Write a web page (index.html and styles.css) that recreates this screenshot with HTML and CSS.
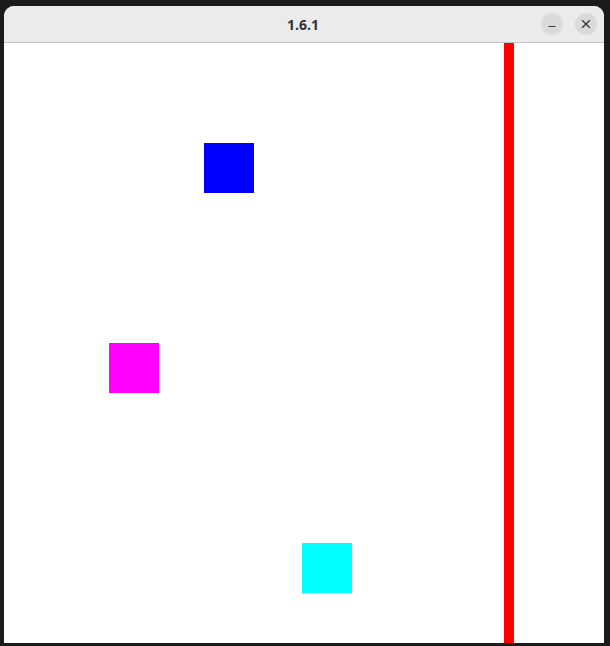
FILE: index.html
```html
<!DOCTYPE html>
<html>
<head>
<meta charset="utf-8">
<link rel="stylesheet" href="styles.css">
</head>
<body>
<div class="window">
  <div class="titlebar">
    <div class="title">1.6.1</div>
    <div class="controls">
      <button class="ctl" aria-label="minimize">
        <svg width="10" height="10" viewBox="0 0 10 10"><path d="M1.5 7.5h7" stroke="#333" stroke-width="1.2"/></svg>
      </button>
      <button class="ctl" aria-label="close">
        <svg width="10" height="10" viewBox="0 0 10 10"><path d="M1.2 1.2l7.6 7.6M8.8 1.2l-7.6 7.6" stroke="#333" stroke-width="1.3"/></svg>
      </button>
    </div>
  </div>
  <div class="canvas">
    <div class="sq blue"></div>
    <div class="sq magenta"></div>
    <div class="sq cyan"></div>
    <div class="bar"></div>
  </div>
</div>
</body>
</html>
```
FILE: styles.css
```css
html, body {
  margin: 0;
  padding: 0;
  background: #1b1b1b;
  width: 610px;
  height: 646px;
  overflow: hidden;
}
body {
  padding: 6px 0 0 4px;
  box-sizing: border-box;
  font-family: "Open Sans", "Noto Sans", "DejaVu Sans", sans-serif;
}
.window {
  width: 600px;
  border-radius: 10px 10px 0 0;
  overflow: hidden;
  background: #fff;
}
.titlebar {
  position: relative;
  height: 36px;
  background: #ebebeb;
  border-bottom: 1px solid #c3c3c3;
  display: flex;
  align-items: center;
  justify-content: center;
}
.title {
  font-size: 14px;
  font-weight: 700;
  color: #333;
  margin-left: -2px;
}
.controls {
  position: absolute;
  right: 7px;
  top: 7px;
  display: flex;
  gap: 12px;
}
.ctl {
  width: 22px;
  height: 22px;
  border-radius: 50%;
  border: 0;
  padding: 0;
  background: #dadada;
  display: flex;
  align-items: center;
  justify-content: center;
}
.canvas {
  position: relative;
  height: 600px;
  background: #fff;
}
.sq {
  position: absolute;
  width: 50px;
  height: 50px;
}
.blue { left: 200px; top: 100px; background: #0000ff; }
.magenta { left: 105px; top: 300px; background: #ff00ff; }
.cyan { left: 298px; top: 500px; background: #00ffff; }
.bar {
  position: absolute;
  left: 500px;
  top: 0;
  width: 10px;
  height: 600px;
  background: #ff0000;
}
```
